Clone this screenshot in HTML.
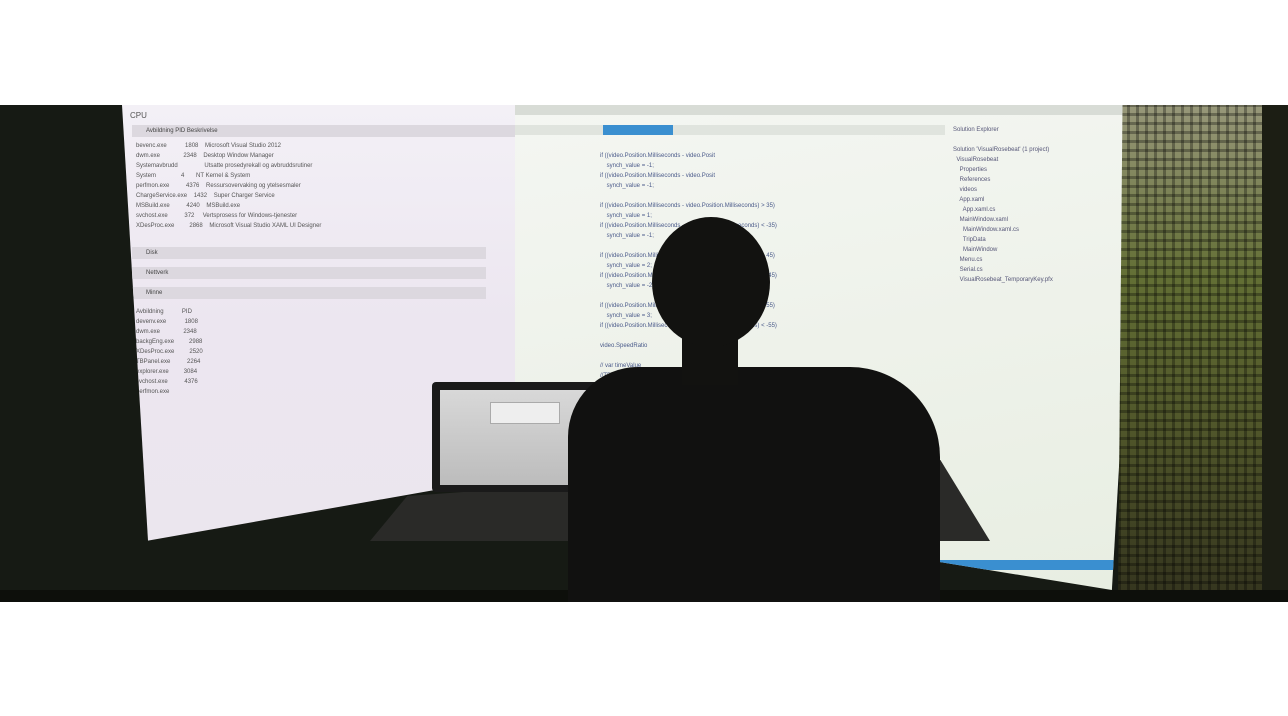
<!DOCTYPE html>
<html><head><meta charset="utf-8"><style>
html,body{margin:0;padding:0;background:#fff;width:1288px;height:716px;overflow:hidden;font-family:"Liberation Sans",sans-serif}
.band{position:absolute;left:0;top:105px;width:1288px;height:497px;background:#161a14;overflow:hidden}
.abs{position:absolute}
.left{left:122px;top:0;width:400px;height:440px;background:linear-gradient(180deg,#f3f0f6 0%,#ece6f0 50%,#ebe6ee 100%);clip-path:polygon(0 0,100% 0,100% 84%,6.5% 99%)}
.center{left:515px;top:0;width:625px;height:485px;background:linear-gradient(170deg,#f4f6f2 0%,#eef2ea 50%,#e8eee2 100%);clip-path:polygon(0 0,100% 0,95.5% 100%,0 80%)}
.right{left:1118px;top:0;width:150px;height:497px;background:repeating-linear-gradient(0deg,rgba(0,0,0,.3) 0 3px,transparent 3px 9px),repeating-linear-gradient(90deg,rgba(0,0,0,.3) 0 3px,transparent 3px 9px),linear-gradient(180deg,#98987a 0%,#626e34 35%,#50562a 65%,#34341e 100%);clip-path:polygon(3% 0,100% 0,100% 100%,0 100%)}
.rightedge{left:1262px;top:0;width:26px;height:497px;background:#1c1e14}
.txt{font-size:6px;color:#555;line-height:10px;white-space:pre}
.bar{background:#dcd8df;height:12px;font-size:6px;color:#444;line-height:12px;padding-left:14px}
.head{left:652px;top:112px;width:118px;height:130px;border-radius:50%;background:#121210}
.neck{left:682px;top:220px;width:56px;height:60px;background:#121210}
.body{left:568px;top:262px;width:372px;height:260px;background:#111110;border-radius:70px 90px 0 0}
.laptop{left:432px;top:277px;width:180px;height:110px;background:#1a1a1a;border-radius:4px}
.lscr{left:440px;top:285px;width:165px;height:95px;background:linear-gradient(#d8d8d8,#bcbcbc)}
.desk{left:370px;top:355px;width:620px;height:90px;background:#2a2a28;clip-path:polygon(6% 40%,88% 0,92% 0,100% 90%,0 90%)}
.floor{left:0;top:485px;width:1288px;height:12px;background:#0d0f0b}
</style></head><body>
<div class="band">
<div class="abs left">
<div class="txt" style="position:absolute;left:8px;top:6px;font-size:8px">CPU</div>
<div class="bar" style="position:absolute;left:10px;top:20px;width:370px">Avbildning              PID      Beskrivelse</div>
<div class="txt" style="position:absolute;left:14px;top:36px">bevenc.exe           1808    Microsoft Visual Studio 2012
dwm.exe              2348    Desktop Window Manager
Systemavbrudd                Utsatte prosedyrekall og avbruddsrutiner
System               4       NT Kernel &amp; System
perfmon.exe          4376    Ressursovervaking og ytelsesmaler
ChargeService.exe    1432    Super Charger Service
MSBuild.exe          4240    MSBuild.exe
svchost.exe          372     Vertsprosess for Windows-tjenester
XDesProc.exe         2868    Microsoft Visual Studio XAML UI Designer</div>
<div class="bar" style="position:absolute;left:10px;top:142px;width:340px">Disk</div>
<div class="bar" style="position:absolute;left:10px;top:162px;width:340px">Nettverk</div>
<div class="bar" style="position:absolute;left:10px;top:182px;width:340px">Minne</div>
<div class="txt" style="position:absolute;left:14px;top:202px">Avbildning           PID
devenv.exe           1808
dwm.exe              2348
backgEng.exe         2988
XDesProc.exe         2520
TBPanel.exe          2264
explorer.exe         3084
svchost.exe          4376
perfmon.exe</div>
</div>
<div class="abs center">
<div style="position:absolute;left:0;top:0;width:625px;height:10px;background:#d8dcd6"></div>
<div style="position:absolute;left:0;top:20px;width:430px;height:10px;background:#e0e4de"></div>
<div style="position:absolute;left:88px;top:20px;width:70px;height:10px;background:#3a8fd0"></div>
<div class="txt" style="position:absolute;left:85px;top:46px;color:#4a5a8a">if ((video.Position.Milliseconds - video.Posit
    synch_value = -1;
if ((video.Position.Milliseconds - video.Posit
    synch_value = -1;

if ((video.Position.Milliseconds - video.Position.Milliseconds) > 35)
    synch_value = 1;
if ((video.Position.Milliseconds - video.Position.Milliseconds) < -35)
    synch_value = -1;

if ((video.Position.Milliseconds - video.Position.Milliseconds) > 45)
    synch_value = 2;
if ((video.Position.Milliseconds - video.Position.Milliseconds) < -45)
    synch_value = -2;

if ((video.Position.Milliseconds - video.Position.Milliseconds) > 55)
    synch_value = 3;
if ((video.Position.Milliseconds - video.Position.Milliseconds) < -55)

video.SpeedRatio

// var timeValue
//TB.Content = ...
textbox.Content = video.Position.Milliseconds;</div>
<div class="txt" style="position:absolute;left:438px;top:20px;color:#557">Solution Explorer

Solution 'VisualRosebeat' (1 project)
  VisualRosebeat
    Properties
    References
    videos
    App.xaml
      App.xaml.cs
    MainWindow.xaml
      MainWindow.xaml.cs
      TripData
      MainWindow
    Menu.cs
    Serial.cs
    VisualRosebeat_TemporaryKey.pfx</div>
<div style="position:absolute;left:425px;top:455px;width:180px;height:10px;background:#3a8fd0"></div>
</div>
<div class="abs right"></div>
<div class="abs rightedge"></div>
<div class="abs floor"></div>
<div class="abs desk"></div>
<div class="abs laptop"></div>
<div class="abs lscr"></div>
<div class="abs" style="left:490px;top:297px;width:68px;height:20px;background:#eee;border:1px solid #aaa"></div>
<div class="abs body"></div>
<div class="abs neck"></div>
<div class="abs head"></div>
</div>
</body></html>
